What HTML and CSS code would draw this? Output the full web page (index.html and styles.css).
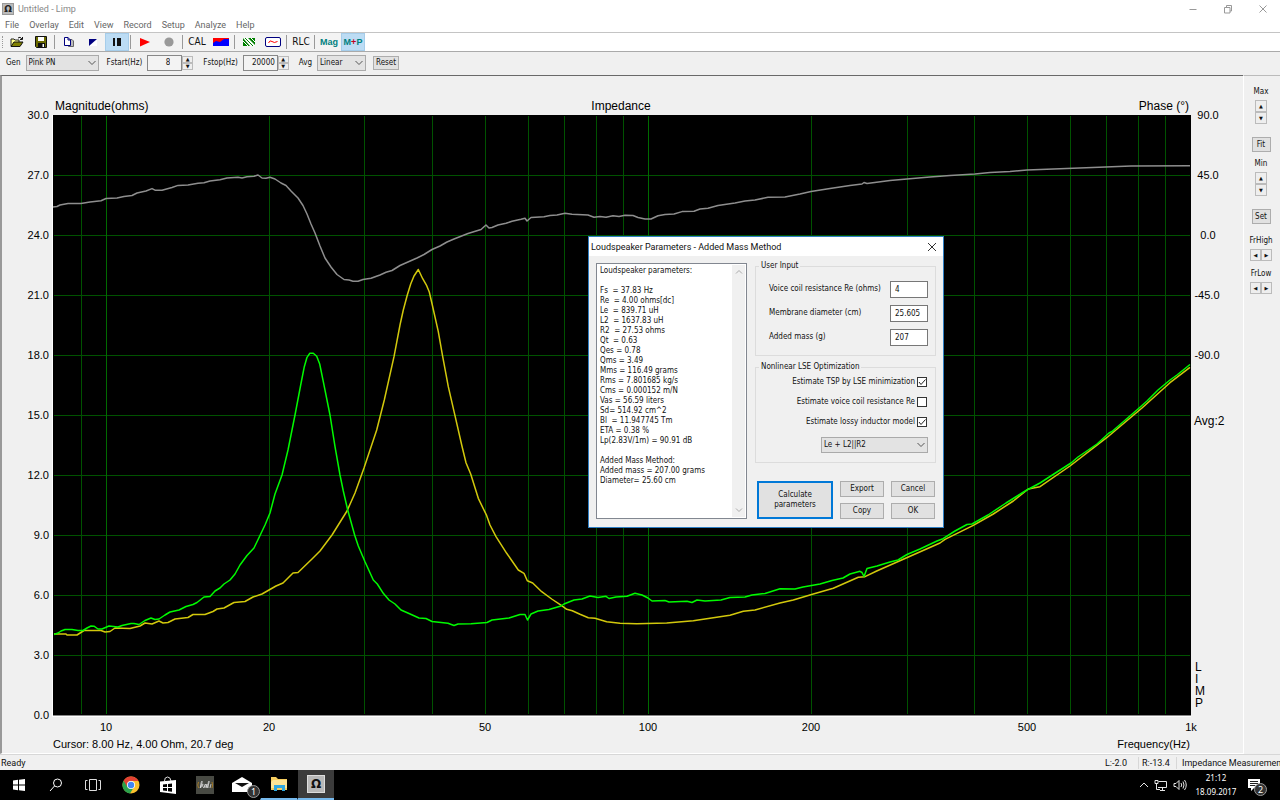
FILE: index.html
```html
<!DOCTYPE html>
<html lang="en">
<head>
<meta charset="utf-8">
<title>Untitled - Limp</title>
<link rel="stylesheet" href="styles.css">
</head>
<body>
<header class="titlebar">
  <span class="app-icon">Ω</span>
  <span class="title">Untitled - Limp</span>
  <div class="window-buttons">
    <button aria-label="Minimize"><svg width="10" height="10" viewBox="0 0 10 10"><path d="M1.500 5.500H8.500"/></svg></button>
    <button aria-label="Restore"><svg width="10" height="10" viewBox="0 0 10 10"><path d="M1.500 3.500H7V9H1.500ZM3.500 3.500V1.500H8.500V7H7"/></svg></button>
    <button aria-label="Close"><svg width="10" height="10" viewBox="0 0 10 10"><path d="M1.500 1.500L8.500 8.500M8.500 1.500L1.500 8.500"/></svg></button>
  </div>
</header>
<nav class="menubar">
  <button>File</button><button>Overlay</button><button>Edit</button><button>View</button><button>Record</button><button>Setup</button><button>Analyze</button><button>Help</button>
</nav>
<div class="toolbar">
  <div class="tools">
    <i class="grip"></i>
    <button aria-label="Open"><svg width="14" height="12" viewBox="0 0 14 12"><path d="M1 10V3H4L5 4H9V6" fill="#ffff8c" stroke="#222"/><path d="M1 10.500L4 6H13L10 10.500Z" fill="#808000" stroke="#111"/><path d="M8 2Q10 0 12 3M12.500 1V3.500H10" fill="none" stroke="#111"/></svg></button>
    <button aria-label="Save"><svg width="12" height="12" viewBox="0 0 12 12"><path d="M.5.5H11.500V11.500H1.500L.5 10.500Z" fill="#6b6b00" stroke="#111"/><path d="M3 1H9V5H3Z" fill="#fff"/><path d="M3 7H10V11.500H3Z" fill="#111"/><path d="M7.500 8H9V11H7.500Z" fill="#fff"/></svg></button>
    <i class="sep"></i>
    <button aria-label="Copy"><svg width="12" height="12" viewBox="0 0 12 12"><path d="M5.500 3.500H9L10.500 5V10.500H5.500Z" fill="#bbb" stroke="#666"/><path d="M1.500 1.500H5L7.500 4V9.500H1.500Z" fill="#fff" stroke="#000080"/><path d="M5 1.500V4H7.500" fill="none" stroke="#000080"/></svg></button>
    <button aria-label="Background colour"><svg width="10" height="10" viewBox="0 0 10 10"><path d="M1 2H9V9H1Z" fill="#fff"/><path d="M1 2H9L1 9Z" fill="#000080"/></svg></button>
    <button class="on" aria-label="Pause"><svg width="10" height="10" viewBox="0 0 10 10"><path d="M1 1H3V9H1ZM5 1H9V9H5Z" fill="#111"/></svg></button>
    <i class="sep"></i>
    <button aria-label="Start"><svg width="10" height="10" viewBox="0 0 10 10"><path d="M0 1L10 5L0 9.500Z" fill="#f00"/></svg></button>
    <button aria-label="Stop"><svg width="10" height="10" viewBox="0 0 10 10"><circle cx="5" cy="5" r="4.600" fill="#999"/></svg></button>
    <i class="sep"></i>
    <button class="word">CAL</button>
    <button aria-label="Compare"><svg width="16" height="8" viewBox="0 0 16 8"><path d="M0 0H16V8H0Z" fill="#f00"/><path d="M0 8V5L3 3L7 4L11 1H16V8Z" fill="#00f"/></svg></button>
    <i class="sep"></i>
    <button aria-label="Overlay"><svg width="14" height="10" viewBox="0 0 14 10"><path d="M1 1H13V9H1Z" fill="#fff"/><path d="M1 1V9H8ZM6 1H13V8Z" fill="#008000"/><path d="M2 1L10 9M1 4L6 9M9 1L13 5" stroke="#fff"/><path d="M3 1L11 9" stroke="#008000"/></svg></button>
    <button aria-label="Generator"><svg width="16" height="10" viewBox="0 0 16 10"><rect x=".5" y=".5" width="15" height="9" rx="1.500" fill="#fff" stroke="#000080"/><path d="M3.500 6Q5 2.500 7 4.500T12.500 4.500" fill="none" stroke="#f00"/></svg></button>
    <i class="sep"></i>
    <button class="word">RLC</button>
    <i class="sep"></i>
    <button class="mode">Mag</button>
    <button class="mode on">M<b>+</b>P</button>
  </div>
</div>
<div class="options">
  <label for="gen">Gen</label>
  <span class="combo gen"><select id="gen"><option>Pink PN</option></select><svg width="8" height="6" viewBox="0 0 8 6"><path d="M.5 1L4 4.500L7.500 1"/></svg></span>
  <label for="fstart">Fstart(Hz)</label>
  <span class="number"><input id="fstart" value="8"><span class="spin"><button aria-label="Increase start">▲</button><button aria-label="Decrease start">▼</button></span></span>
  <label for="fstop">Fstop(Hz)</label>
  <span class="number"><input id="fstop" value="20000"><span class="spin"><button aria-label="Increase stop">▲</button><button aria-label="Decrease stop">▼</button></span></span>
  <label for="avg">Avg</label>
  <span class="combo avg"><select id="avg"><option>Linear</option></select><svg width="8" height="6" viewBox="0 0 8 6"><path d="M.5 1L4 4.500L7.500 1"/></svg></span>
  <button class="btn">Reset</button>
</div>
<main class="work">
  <section class="chart">
    <svg viewBox="2 76 1241 677" role="img" aria-label="Impedance">
      <rect x="52" y="115" width="1139" height="602" fill="#fff"/>
      <rect x="53" y="115" width="1138" height="600" fill="#000"/>
      <path d="M53 715.500H1191" stroke="#888"/>
      <g class="grid">
        <path d="M54 175.500H1190M54 235.500H1190M54 295.500H1190M54 355.500H1190M54 415.500H1190M54 475.500H1190M54 535.500H1190M54 595.500H1190M54 655.500H1190"/>
        <path d="M81.500 116V714M106.500 116V714M269.500 116V714M364.500 116V714M432.500 116V714M485.500 116V714M528.500 116V714M564.500 116V714M596.500 116V714M623.500 116V714M648.500 116V714M811.500 116V714M907.500 116V714M974.500 116V714M1027.500 116V714M1070.500 116V714M1106.500 116V714M1138.500 116V714M1165.500 116V714"/>
        <path class="major" d="M106.500 116V714M648.500 116V714"/>
      </g>
      <polyline class="curve phase" points="53,207 57,206.500 60,205 68,203.400 81,203.400 90,202 101,200.700 106,198.500 117,198 124,196.500 132,195.500 137,193 146,191 152,188.600 155,190.200 162,190.200 172,187.500 178,185.400 188,185 198,183.300 204,182.700 210,181 220,179.700 227,178 238,177.300 242,178 247,176.800 254,176.300 258,175 262,178 266,178.200 270,177.300 275,179 281,183 286,185.500 291,191 298,198 303,205.500 307,214 311,224 315,233 320,246 325,258 331,267 337,274.500 344,279.500 349,280 353,281.300 358,281.300 363,279.500 371,278.300 380,275 386,272.300 392,270.500 400,265.500 417,258 424,254.500 432,249.500 440,246 447,242 454,239 468,233.500 481,229.500 486,225 489,228 492,227.500 498,225 506,223.300 512,221.300 521,219.300 525,218.300 527,221 531,217.500 544,216.800 550,215.500 557,215 565,213.300 572,214.300 588,215 594,217.300 600,216.500 606,217.300 613,215.700 619,216.500 625,215.300 633,215.500 638,217.500 645,219 651,219 658,215.800 665,214.500 674,214 682,211.600 694,211.300 700,209 708,208.300 718,205.500 735,203 745,201 755,200 768,197.300 785,197 800,194 811,191.500 830,188.500 850,185.500 862,184 864,182.500 867,183.500 890,180.500 907,179 930,177 950,175.500 975,174 990,172.500 1010,171.500 1027,170 1060,168.700 1099,167.300 1131,166 1190,165.800"/>
      <polyline class="curve added" points="54,634 66,634 67,635 77,635 84,630.500 101,630.500 105,632 110,631.500 115,628 130,628.500 140,626 145,623 152,624 159,621 163,623 168,622.500 175,619 188,617.500 193,614.500 205,614.500 213,611.500 217,609 224,608 234,602.500 245,601.500 253,597 262,594 276,586 283,583 293,573 298,572.500 312,559 320,551 332,535 347,511 355,493 364,468 376.700,430 384.300,400 394,356.700 400,325 403.300,310 407.300,295 410.700,284 414,276 418.300,269.500 422.700,278.700 426.700,285.700 429.300,292 432.300,305 438.300,331.700 442.700,356.700 448.300,386.700 454.700,414.300 461.700,445 466,462.700 470.700,474 478.300,498.300 486.700,515.700 490,525 496,536.700 506.700,553.300 518.300,570 524,573.300 527.300,580.700 532.700,583 541.700,591.700 551.700,599 561.700,605.700 566.700,609.300 572.300,610.700 580,614.300 588.300,617.700 595,618.300 606.700,621.700 620,623.300 636.700,623.700 666.700,623 693.300,620.700 713.300,617.700 730,615.300 743.300,611.300 755,610 780,603 793.300,600 813.300,594 833.300,588.300 858.300,577.300 865,576.700 876.700,571 906.700,557.700 940,543 945,539.300 973.300,525.300 993.300,514 1013.300,501 1028.300,489 1040,486.700 1070,466 1106.700,437.700 1141.700,408.300 1170,382.700 1190,367.300"/>
      <polyline class="curve free" points="54,634.500 58,633 61,631 65,629.500 72,629.500 78,630.500 83,630.500 87,628 91,626 94,626.200 98,629 102,629 109,626 118,627 122,625.500 131,623.500 134,623.500 139,624.500 145,620.500 151,618 155,619.500 159,619 165,615 170,612 179,610 186,606.500 193,604.500 197,602.500 204,597 210,596.500 215,591 220,588 224,584 230,580 235,574 240,565 247,555.500 254,548 260,535.500 265,525 270,513 275,494 282,475 288,450 295,415 300.700,385 304.300,366.700 307,357.300 309.700,353.300 313.300,353.300 316.700,356.300 319.700,364 323.300,381.700 330,415 335,446.700 340,475 343.300,491 347.700,510 354.700,535.300 358.300,546 365,561.700 373.300,580 377.300,584 383.300,593.300 389,600 395,604 401,610 409,613.500 419,618 426,618.500 432,621.500 448,623.300 454,625.500 458,624 471,623.800 487,622.500 492,620 509,618 520,614.500 525,614.500 527.500,620 531,614 538,611 549,609.500 561,606 564,604 574,600 582,599 590,596 598,597.500 606,596.300 609,598.500 616,597 627,596.300 635,593.300 642,595 648,598 652,601 665,600.500 669,602 687,601.300 692,602.500 697,600 705,601 721,600 730,597.500 745,597 752,595 765,593.500 780,588.800 795,589 803,587 820,584 832,580.500 843,578 850,574 860,571.300 862,572.500 864,576.500 867,568.500 877,566 890,562 898,560 907,554.500 920,549 937,541 943,538.700 955,531 967,524.500 972,524 988,515 1006,503 1026,490.500 1040,483 1057,472 1071,463 1078,457 1097,444 1109,433 1112,431.500 1138,409 1147,401 1158,390 1170,380 1177,375 1190,364.500"/>
      <g class="heading">
        <text x="55" y="110">Magnitude(ohms)</text>
        <text x="621" y="110" text-anchor="middle">Impedance</text>
        <text x="1189" y="110" text-anchor="end">Phase (°)</text>
        <text x="1194" y="425">Avg:2</text>
        <text x="1195" y="671">L</text><text x="1195" y="683">I</text><text x="1195" y="695">M</text><text x="1195" y="707">P</text>
      </g>
      <g class="ticks" text-anchor="end">
        <text x="49" y="119">30.0</text><text x="49" y="179">27.0</text><text x="49" y="239">24.0</text><text x="49" y="299">21.0</text><text x="49" y="359">18.0</text><text x="49" y="419">15.0</text><text x="49" y="479">12.0</text><text x="49" y="539">9.0</text><text x="49" y="599">6.0</text><text x="49" y="659">3.0</text><text x="49" y="719">0.0</text>
      </g>
      <g class="ticks" text-anchor="middle">
        <text x="1208" y="119">90.0</text><text x="1208" y="179">45.0</text><text x="1208" y="239">0.0</text><text x="1207" y="299">-45.0</text><text x="1207" y="359">-90.0</text>
        <text x="106" y="731">10</text><text x="269" y="731">20</text><text x="485" y="731">50</text><text x="648" y="731">100</text><text x="811" y="731">200</text><text x="1027" y="731">500</text><text x="1191" y="731">1k</text>
      </g>
      <g class="ticks">
        <text x="53" y="748">Cursor: 8.00 Hz, 4.00 Ohm, 20.7 deg</text>
        <text x="1190" y="748" text-anchor="end">Frequency(Hz)</text>
      </g>
    </svg>
  </section>
  <aside class="side">
    <div class="ctl"><span>Max</span><span class="spin"><button aria-label="Max up">▲</button><button aria-label="Max down">▼</button></span></div>
    <button class="btn">Fit</button>
    <div class="ctl"><span>Min</span><span class="spin"><button aria-label="Min up">▲</button><button aria-label="Min down">▼</button></span></div>
    <button class="btn">Set</button>
    <div class="ctl"><span>FrHigh</span><span class="spin flat"><button aria-label="High frequency down">◀</button><button aria-label="High frequency up">▶</button></span></div>
    <div class="ctl"><span>FrLow</span><span class="spin flat"><button aria-label="Low frequency down">◀</button><button aria-label="Low frequency up">▶</button></span></div>
  </aside>
  <form class="dialog">
    <header class="dialog-title"><span>Loudspeaker Parameters - Added Mass Method</span>
      <button type="button" aria-label="Close dialog"><svg width="10" height="10" viewBox="0 0 10 10"><path d="M1 1L9 9M9 1L1 9"/></svg></button></header>
    <div class="dialog-body">
      <div class="report">
        <textarea readonly aria-label="Loudspeaker parameters">Loudspeaker parameters:

Fs  = 37.83 Hz
Re  = 4.00 ohms[dc]
Le  = 839.71 uH
L2  = 1637.83 uH
R2  = 27.53 ohms
Qt  = 0.63
Qes = 0.78
Qms = 3.49
Mms = 116.49 grams
Rms = 7.801685 kg/s
Cms = 0.000152 m/N
Vas = 56.59 liters
Sd= 514.92 cm^2
Bl  = 11.947745 Tm
ETA = 0.38 %
Lp(2.83V/1m) = 90.91 dB

Added Mass Method:
Added mass = 207.00 grams
Diameter= 25.60 cm</textarea>
        <div class="scroll"><svg width="8" height="6" viewBox="0 0 8 6"><path d="M1 4.500L4 1.500L7 4.500"/></svg><svg width="8" height="6" viewBox="0 0 8 6"><path d="M1 1.500L4 4.500L7 1.500"/></svg></div>
      </div>
      <div class="settings">
        <fieldset class="inputs"><legend>User Input</legend>
          <div><label for="re">Voice coil resistance Re (ohms)</label><input id="re" value="4"></div>
          <div><label for="dia">Membrane diameter (cm)</label><input id="dia" value="25.605"></div>
          <div><label for="mass">Added mass (g)</label><input id="mass" value="207"></div>
        </fieldset>
        <fieldset class="lse"><legend>Nonlinear LSE Optimization</legend>
          <label>Estimate TSP by LSE minimization <span class="check"><input type="checkbox" checked><svg width="10" height="10" viewBox="0 0 10 10"><path d="M2 5L4 7.500L8.500 2.500"/></svg></span></label>
          <label>Estimate voice coil resistance Re <span class="check"><input type="checkbox"><svg width="10" height="10" viewBox="0 0 10 10"><path d="M2 5L4 7.500L8.500 2.500"/></svg></span></label>
          <label>Estimate lossy inductor model <span class="check"><input type="checkbox" checked><svg width="10" height="10" viewBox="0 0 10 10"><path d="M2 5L4 7.500L8.500 2.500"/></svg></span></label>
          <span class="combo model"><select aria-label="Inductor model"><option>Le + L2||R2</option></select><svg width="8" height="6" viewBox="0 0 8 6"><path d="M.5 1L4 4.500L7.500 1"/></svg></span>
        </fieldset>
        <div class="actions">
          <button type="button" class="btn primary">Calculate parameters</button>
          <button type="button" class="btn">Export</button><button type="button" class="btn">Cancel</button>
          <button type="button" class="btn">Copy</button><button type="button" class="btn">OK</button>
        </div>
      </div>
    </div>
  </form>
</main>
<footer class="status"><span class="ready">Ready</span><span class="left-level">L:-2.0</span><span class="right-level">R:-13.4</span><span class="what">Impedance Measuremen</span></footer>
<nav class="taskbar">
  <button aria-label="Start menu"><svg width="14" height="14" viewBox="0 0 14 14"><path d="M1 2.500L6 1.800V6.500H1ZM7 1.700L13 1V6.500H7ZM1 7.500H6V12.200L1 11.500ZM7 7.500H13V13L7 12.300Z" fill="#fff"/></svg></button>
  <button aria-label="Search"><svg width="14" height="14" viewBox="0 0 14 14"><g fill="none" stroke="#fff"><circle cx="8.500" cy="5" r="4"/><path d="M5.500 8L1 13"/></g></svg></button>
  <button aria-label="Task view"><svg width="16" height="14" viewBox="0 0 16 14"><path d="M4.500 1.500H11.500V12.500H4.500ZM2.500 2.500H.5V11.500H2.500M13.500 2.500H15.500V11.500H13.500" fill="none" stroke="#ddd"/></svg></button>
  <button class="apps" aria-label="Chrome"><svg width="18" height="18" viewBox="0 0 18 18"><circle cx="9" cy="9" r="8.500" fill="#fbc02d"/><path d="M9 9L1.600 4.700A8.500 8.500 0 0 0 8 17.500L12 11Z" fill="#2ba24c"/><path d="M1.600 4.700A8.500 8.500 0 0 1 16.500 5H9A4 4 0 0 0 5.500 11Z" fill="#e34133"/><circle cx="9" cy="9" r="4" fill="#fff"/><circle cx="9" cy="9" r="3.200" fill="#4285f4"/></svg></button>
  <button aria-label="Store"><svg width="18" height="18" viewBox="0 0 18 18"><path d="M5.500 5Q5.500 1 8.500 1T12 5" fill="none" stroke="#ddd"/><path d="M1 5.500L17 4V18L1 16Z" fill="#fff"/><path d="M4 8.500L8 8V11H4ZM9 8L13 7.500V11H9ZM4 12H8V15L4 14.500ZM9 12H13V15.700L9 15.200Z" fill="#000"/></svg></button>
  <button aria-label="Kuki"><svg width="18" height="18" viewBox="0 0 18 18"><path d="M0 0H18V18H0Z" fill="#484a43"/><path d="M2.500 6Q1 9 2.500 12M16 6Q17 9 16 12" fill="none" stroke="#a67b25"/><path d="M4 12Q7 5 6 5T4.500 12Q7 7 7 8T6.500 10L8 12Q9 8 9.500 8Q8 12 10 11L11 8Q10 12 11 12Q14 5 13 5T12 12M15 8L14 12" fill="none" stroke="#ddd" stroke-width=".8"/></svg></button>
  <button aria-label="Mail, 1 unread"><svg width="20" height="18" viewBox="0 0 20 18"><path d="M0 7L10 1L20 7V16H0Z" fill="#fff"/><path d="M3 7H17L10 11Z" fill="#111"/></svg><span class="badge">1</span></button>
  <button class="running" aria-label="File Explorer"><svg width="18" height="16" viewBox="0 0 18 16"><path d="M1 1H6L8 3H17V14H1Z" fill="#f6ce60"/><path d="M3 4H17V12H1V6Z" fill="#ffe596"/><path d="M4 15V9H15V15H12V12H7V15Z" fill="#31a8e0"/></svg></button>
  <button class="running current" aria-label="Limp"><span class="omega">Ω</span></button>
  <div class="tray">
    <svg width="10" height="8" viewBox="0 0 10 8"><path d="M1 6L5 2L9 6"/></svg>
    <svg width="14" height="12" viewBox="0 0 14 12"><path d="M4.500 2.500H12.500V8.500H4M8.500 9V11M6 11.500H11M1 1.500H4V4.500H1ZM2.500 5V10.500H6"/></svg>
    <svg width="14" height="12" viewBox="0 0 14 12"><path d="M1 4.500H3L6 1.500V10.500L3 7.500H1ZM8 4Q9.500 6 8 8M10 2.500Q12 6 10 9.500M11.500 1Q15 6 11.500 11"/></svg>
    <time datetime="2017-09-18T21:12"><span>21:12</span><span>18.09.2017</span></time>
    <button aria-label="Notifications"><svg width="14" height="14" viewBox="0 0 14 14"><path d="M1 1H13V10H7L4 13V10H1Z" fill="#fff"/><path d="M3 3.500H11M3 5.500H11M3 7.500H8" stroke="#222"/></svg><span class="badge">2</span></button>
  </div>
</nav>
</body>
</html>
```
FILE: styles.css
```css
* { box-sizing: border-box; }
body {
  margin: 0;
  height: 100vh;
  display: flex;
  flex-direction: column;
  overflow: hidden;
  background: #f0f0f0;
  color: #111;
  font: 8px/10px "DejaVu Sans Condensed", "Noto Sans", sans-serif;
}
button, input, select, textarea {
  font: inherit;
  color: inherit;
  margin: 0;
  padding: 0;
  border: 0;
  border-radius: 0;
  background: none;
}
svg { display: block; flex: none; }

.titlebar, .menubar, .dialog-title, .status { font: 9px/12px Roboto, "Noto Sans", sans-serif; }
.titlebar { display: flex; align-items: center; height: 17px; padding-left: 2px; background: #fff; color: #888; }
.app-icon { width: 12px; height: 12px; border: 1px solid #999; background: #bbb; color: #222; font: bold 9px/10px "DejaVu Sans", sans-serif; text-align: center; }
.title { margin-left: 4px; }
.window-buttons { display: flex; margin-left: auto; }
.window-buttons button { width: 35px; display: grid; place-items: center; }
.window-buttons svg { fill: none; stroke: #999; }
.menubar { display: flex; gap: 10px; height: 15px; padding-left: 5px; background: #fff; color: #666; }

.toolbar { height: 20px; background: #fff; border-top: 1px solid #c4c4c4; border-bottom: 1px solid #aaa; }
.tools { display: inline-flex; height: 18px; padding-left: 1px; background: #f3f3f3; }
.grip { width: 2px; margin: 3px 1px; border-left: 1px dotted #999; }
.tools button { width: 24px; display: flex; align-items: center; justify-content: center; }
.tools .on { background: #bcdcf4; box-shadow: inset 0 0 0 1px #a6cdea; }
.sep { width: 2px; margin: 2px 1px; border-left: 1px solid #999; }
.tools .word { font: 10px/12px "DejaVu Sans Condensed", sans-serif; }
.tools .mode { font: bold 9px/12px "Liberation Sans", sans-serif; color: #008080; }
.mode b { color: #c00020; }

.options { display: flex; align-items: center; height: 23px; padding: 0 6px 2px; }
.options label { margin-right: 5px; }
.combo { display: inline-grid; align-items: center; height: 16px; border: 1px solid #aaa; background: #e3e3e3; }
.combo select, .combo svg { grid-area: 1 / 1; }
.combo select { appearance: none; width: 100%; padding-left: 2px; }
.combo svg { justify-self: end; margin-right: 2px; fill: none; stroke: #555; pointer-events: none; }
.gen { width: 73px; margin-right: 8px; }
.avg { width: 49px; margin-right: 7px; }
.number { display: flex; align-items: center; margin-right: 10px; }
.number input { width: 35px; height: 16px; padding-right: 11px; border: 1px solid #888; text-align: right; background: #f3f3f3; }
.number #fstop { padding-right: 2px; }
.spin { display: flex; flex-direction: column; width: 12px; }
.number .spin { width: 11px; }
.spin button { height: 7px; border: 1px solid #bbb; background: #eee; font: 5px/5px "DejaVu Sans", sans-serif; text-align: center; }
.btn { border: 1px solid #adadad; background: #e1e1e1; text-align: center; }
.options .btn { width: 26px; height: 14px; }

.work { position: relative; display: flex; flex: 1; min-height: 0; }
.chart { flex: 1; min-width: 0; border-top: 1px solid #696969; border-left: 2px solid #999; border-bottom: 1px solid #fff; }
.chart svg { width: 100%; height: 100%; }
.grid { fill: none; stroke: #005200; }
.grid .major { stroke: #006a00; }
.curve { fill: none; stroke-width: 1.500; stroke-linejoin: round; }
.phase { stroke: #8e8e8e; }
.added { stroke: #d2c80c; }
.free { stroke: #00fa00; }
.heading { font: 12px "Liberation Sans", sans-serif; }
.ticks { font: 11px "Liberation Sans", sans-serif; }

.side { display: flex; flex-direction: column; align-items: center; width: 37px; padding: 11px 2px 0 0; border-left: 1px solid #fff; border-top: 1px solid #bbb; }
.ctl { display: flex; flex-direction: column; align-items: center; gap: 3px; }
.side .spin button { height: 12px; }
.side .flat { flex-direction: row; width: 22px; }
.side .flat button { width: 11px; }
.side .btn { width: 19px; height: 15px; margin: 13px 0 7px; }
.side .ctl:nth-of-type(3) { margin: 5px 0 8px; }

.dialog { position: absolute; left: 588px; top: 161px; width: 356px; border: 1px solid #2f7fc4; background: #f0f0f0; }
.dialog-title { display: flex; align-items: center; justify-content: space-between; height: 19px; padding: 0 6px 0 2px; background: #fff; color: #111; }
.dialog-title svg { fill: none; stroke: #333; }
.dialog-body { display: flex; gap: 8px; padding: 5px 7px 8px; }
.report { display: flex; flex: 1; margin-top: 2px; border: 1px solid #828790; background: #fff; }
.report textarea { flex: 1; min-width: 0; padding: 2px 0 2px 3px; resize: none; outline: 0; overflow: hidden; white-space: pre; }
.scroll { display: flex; flex-direction: column; justify-content: space-between; align-items: center; width: 13px; margin: 1px 1px 1px 0; padding: 4px 0; background: #f0f0f0; }
.scroll svg { fill: none; stroke: #aaa; }
.settings { width: 181px; }
fieldset { margin: 0; padding: 0; border: 1px solid #dcdcdc; min-width: 0; }
legend { margin-left: 3px; padding: 0 2px; }
.inputs { padding: 6px 0; }
.inputs div { display: flex; align-items: center; justify-content: space-between; height: 24px; padding: 0 7px 0 13px; }
.inputs input { width: 38px; height: 17px; padding-left: 4px; border: 1px solid #777; background: #fff; }
.lse { display: flex; flex-direction: column; align-items: flex-end; margin-top: 6px; padding-bottom: 9px; }
.lse label { display: flex; align-items: center; gap: 2px; height: 20px; margin-right: 8px; }
.check { display: grid; }
.check input { appearance: none; width: 10px; height: 10px; border: 1px solid #333; background: #fff; }
.check input, .check svg { grid-area: 1 / 1; }
.check svg { fill: none; stroke: #222; visibility: hidden; pointer-events: none; }
.check input:checked + svg { visibility: visible; }
.model { width: 107px; margin: 5px 7px 0 0; }
.actions { display: grid; grid-template-columns: 76px 44px 44px; grid-auto-rows: 16px; gap: 6px 7px; margin: 18px 1px 0 2px; }
.actions .primary { grid-row: span 2; padding: 0 14px; border: 2px solid #0078d7; }

.status { display: flex; align-items: center; height: 16px; padding-left: 1px; border-top: 1px solid #d7d7d7; white-space: nowrap; color: #111; }
.ready { flex: 1; }
.left-level { width: 33px; }
.right-level { width: 38px; padding-left: 3px; border-left: 1px solid #d7d7d7; }
.what { width: 104px; padding-left: 5px; border-left: 1px solid #d7d7d7; }

.taskbar { display: flex; height: 30px; background: #000; color: #fff; }
.taskbar > button { position: relative; width: 37px; display: grid; place-items: center; }
.taskbar .apps { margin-left: 1px; }
.badge { position: absolute; right: 0; bottom: 2px; width: 13px; height: 13px; border: 1px solid #999; border-radius: 50%; background: #333; font: 9px/11px "Noto Sans", sans-serif; text-align: center; }
.taskbar .running { border-bottom: 2px solid #76b9ed; border-left: 1px solid #000; }
.taskbar .current { background: #3b3b3b; }
.omega { width: 18px; height: 18px; border: 1px solid #ddd; background: #b8b8b8; color: #111; font: bold 12px/16px "DejaVu Sans", sans-serif; text-align: center; }
.tray { display: flex; align-items: center; gap: 5px; margin-left: auto; padding-right: 13px; }
.tray > svg { fill: none; stroke: #e5e5e5; }
.tray time { display: flex; flex-direction: column; width: 48px; font: 8px/14px "Noto Sans", sans-serif; text-align: center; }
.tray button { position: relative; width: 22px; height: 22px; padding: 2px; }
.tray .badge { bottom: 0; }
```
